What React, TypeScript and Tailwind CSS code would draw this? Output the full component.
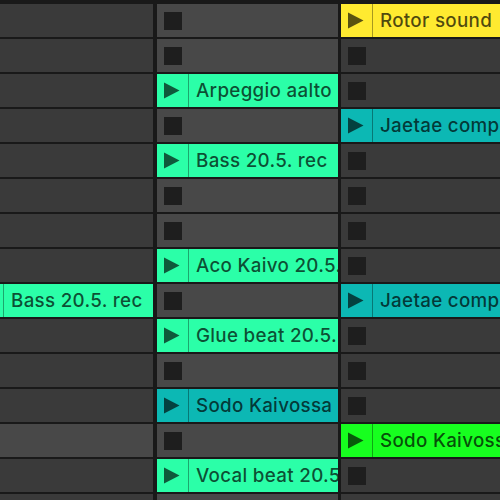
type Cell = { t: string; c: string } | null;

const MINT = "bg-[#2bffa8]";
const TEAL = "bg-[#0cb8b4]";
const YELLOW = "bg-[#ffea30]";
const LIME = "bg-[#17ff1f]";

const col2: Cell[] = [
  null,
  null,
  { t: "Arpeggio aalto", c: MINT },
  null,
  { t: "Bass 20.5. rec", c: MINT },
  null,
  null,
  { t: "Aco Kaivo 20.5. rec", c: MINT },
  null,
  { t: "Glue beat 20.5. rec", c: MINT },
  null,
  { t: "Sodo Kaivossa rec", c: TEAL },
  null,
  { t: "Vocal beat 20.5. rec", c: MINT },
  null,
];

const col3: Cell[] = [
  { t: "Rotor sound", c: YELLOW },
  null,
  null,
  { t: "Jaetae comp", c: TEAL },
  null,
  null,
  null,
  null,
  { t: "Jaetae comp", c: TEAL },
  null,
  null,
  null,
  { t: "Sodo Kaivossa", c: LIME },
  null,
  null,
];

function Clip({ cell }: { cell: { t: string; c: string } }) {
  return (
    <div className={`h-[33px] shrink-0 flex items-stretch overflow-hidden ${cell.c}`}>
      <div className="w-[32px] shrink-0 flex items-center pl-[7px] border-r border-black/35">
        <svg width="16" height="17" viewBox="0 0 16 17" className="fill-black/65">
          <path d="M0 0.5 L15.5 8.5 L0 16.5 Z" />
        </svg>
      </div>
      <div className="pl-[7px] flex-1 min-w-0 overflow-hidden whitespace-nowrap text-[18.8px] font-medium leading-[33px] tracking-[0.3px] text-black/70">
        {cell.t}
      </div>
    </div>
  );
}

function Slot({ light }: { light: boolean }) {
  return (
    <div
      className={`h-[33px] shrink-0 flex items-center pl-[7px] ${light ? "bg-[#484848]" : "bg-[#3a3a3a]"}`}
    >
      <div className="w-[18px] h-[18px] bg-[#1e1e1e]" />
    </div>
  );
}

export default function App() {
  return (
    <div
      className="w-[500px] h-[500px] overflow-hidden bg-[#191919] flex items-start pt-[4px]"
      style={{ fontFamily: "Inter, 'Noto Sans', sans-serif" }}
    >
      <div className="w-[153px] shrink-0 flex flex-col gap-[2px]">
        {Array.from({ length: 15 }).map((_, i) =>
          i === 8 ? (
            <div key={i} className="h-[33px] shrink-0 flex items-stretch bg-[#2bffa8]">
              <div className="w-[4px] shrink-0 border-r border-black/35" />
              <div className="pl-[7px] whitespace-nowrap text-[18.8px] font-medium leading-[33px] tracking-[0.3px] text-black/70">
                Bass 20.5. rec
              </div>
            </div>
          ) : (
            <div
              key={i}
              className={`h-[33px] shrink-0 ${i === 12 ? "bg-[#484848]" : "bg-[#3a3a3a]"}`}
            />
          )
        )}
      </div>
      <div className="w-[181px] ml-[4px] shrink-0 flex flex-col gap-[2px]">
        {col2.map((c, i) => (c ? <Clip key={i} cell={c} /> : <Slot key={i} light />))}
      </div>
      <div className="w-[190px] ml-[3px] shrink-0 flex flex-col gap-[2px]">
        {col3.map((c, i) => (c ? <Clip key={i} cell={c} /> : <Slot key={i} light={false} />))}
      </div>
    </div>
  );
}
